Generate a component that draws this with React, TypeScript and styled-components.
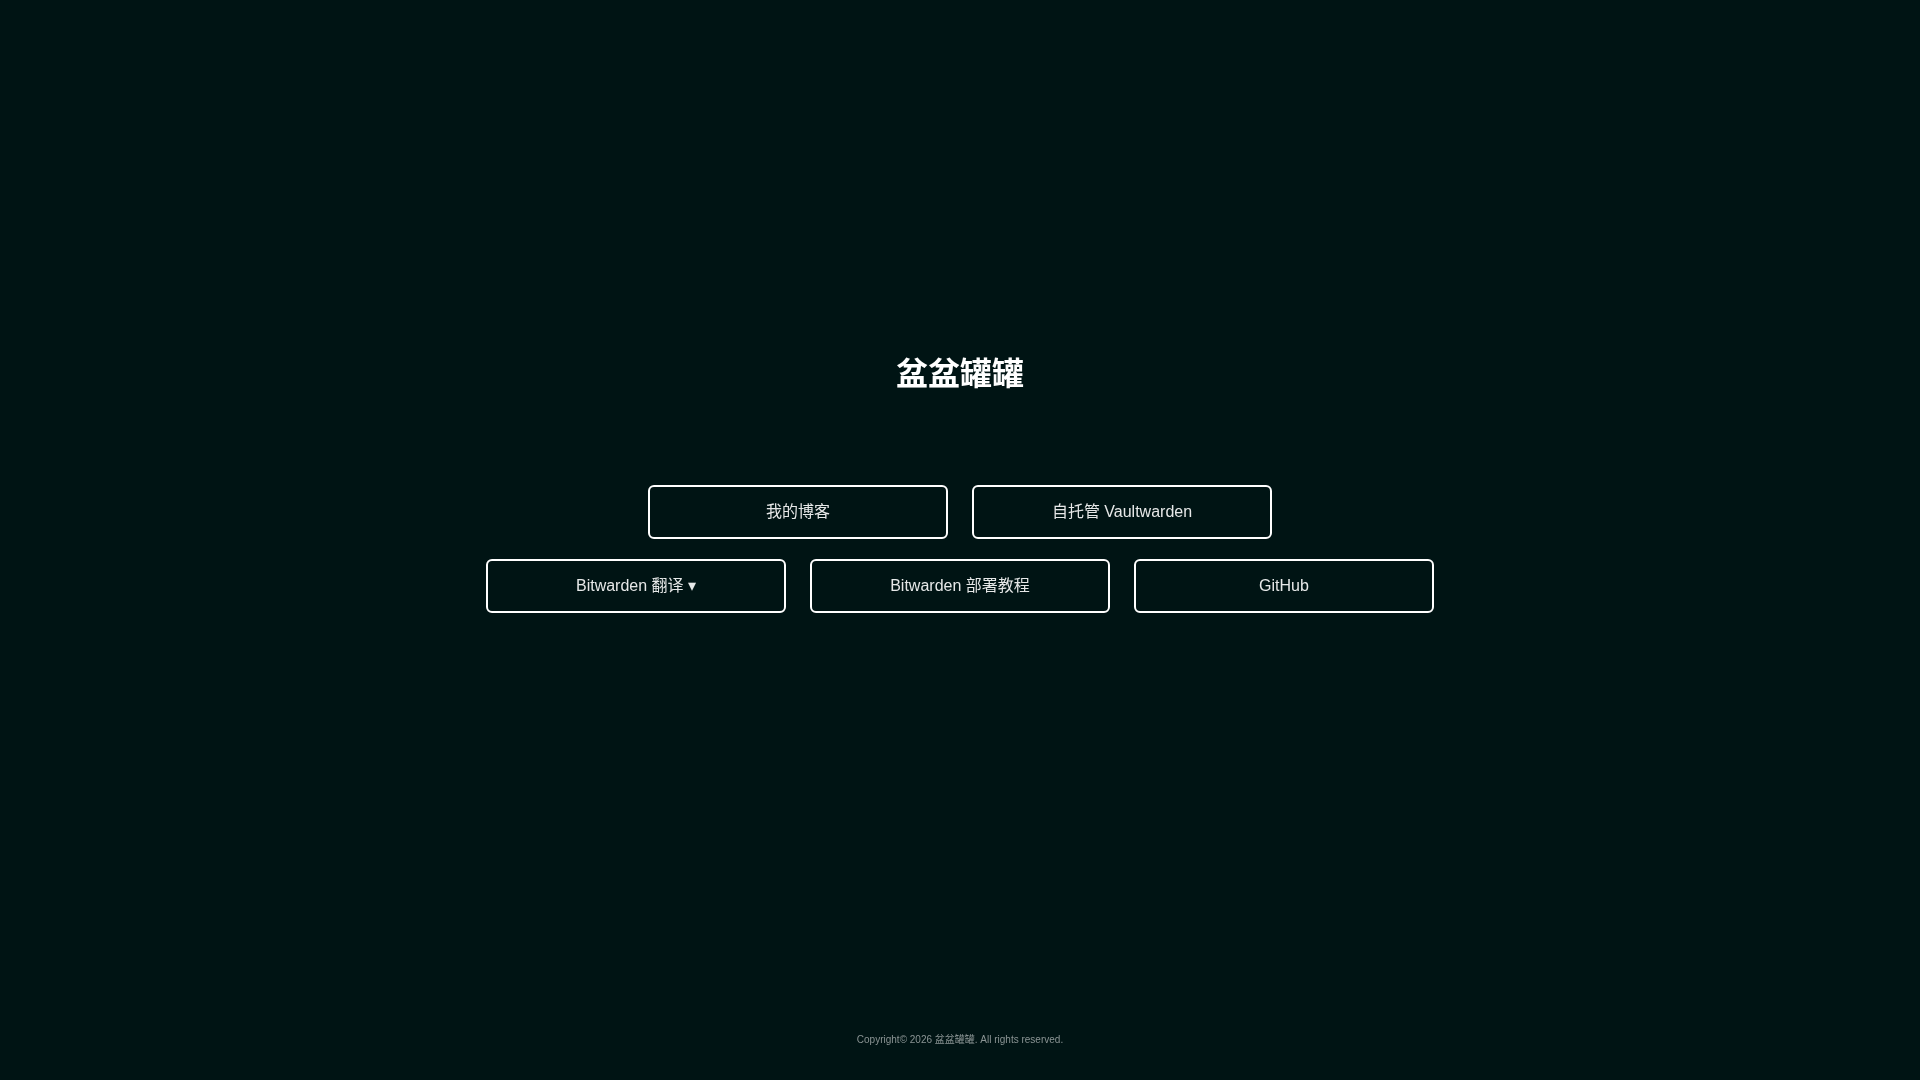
import styled, { createGlobalStyle } from 'styled-components';

const GlobalStyle = createGlobalStyle`
  html, body {
    margin: 0;
    padding: 0;
    height: 100%;
    background-color: #001414;
  }
  body {
    font-family: "Liberation Sans", "Noto Sans CJK SC", sans-serif;
    color: #fff;
  }
`;

const Page = styled.div`
  height: 1080px;
  display: flex;
  flex-direction: column;
  align-items: center;
  box-sizing: border-box;
  will-change: transform;
`;

const Main = styled.main`
  flex: 1;
  display: flex;
  flex-direction: column;
  align-items: center;
  padding-top: 355px;
`;

const Title = styled.h1`
  margin: 0 0 91px;
  font-size: 32px;
  line-height: 39px;
  font-weight: 700;
`;

const Row = styled.div`
  display: flex;
  justify-content: center;
  gap: 24px;
  margin-bottom: 20px;
`;

const LinkButton = styled.a`
  width: 300px;
  height: 54px;
  box-sizing: border-box;
  display: flex;
  align-items: center;
  justify-content: center;
  border: 2px solid #fff;
  border-radius: 6px;
  color: #e6e8e8;
  font-size: 16px;
  line-height: 18px;
  text-decoration: none;
`;

const Footer = styled.footer`
  font-size: 10px;
  line-height: 12px;
  color: #8a9494;
  padding-bottom: 34px;
`;

const rows = [
  ['我的博客', '自托管 Vaultwarden'],
  ['Bitwarden 翻译 ▾', 'Bitwarden 部署教程', 'GitHub'],
];

const App = () => {
  return (
    <Page>
      <GlobalStyle />
      <Main>
        <Title>盆盆罐罐</Title>
        {rows.map((row) => (
          <Row key={row[0]}>
            {row.map((label) => (
              <LinkButton key={label} href="#">
                {label}
              </LinkButton>
            ))}
          </Row>
        ))}
      </Main>
      <Footer>Copyright© 2026 盆盆罐罐. All rights reserved.</Footer>
    </Page>
  );
};

export default App;
